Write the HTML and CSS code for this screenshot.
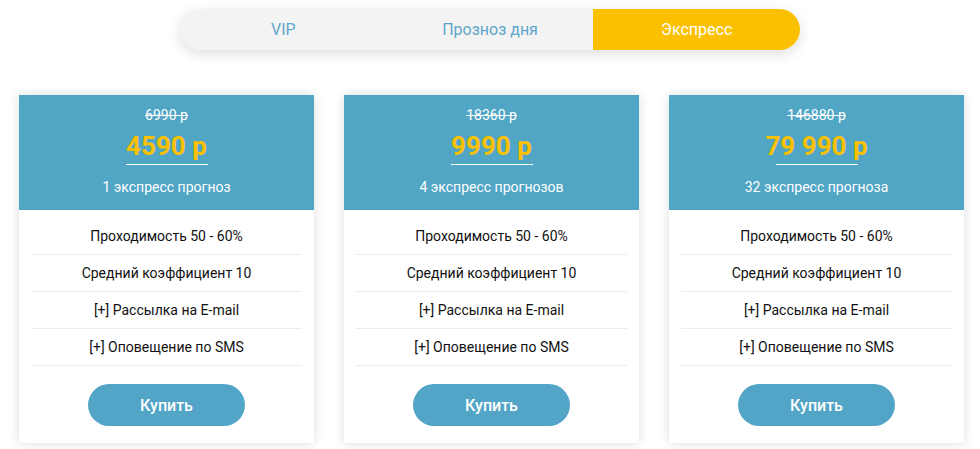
FILE: index.html
```html
<!DOCTYPE html>
<html lang="ru">
<head>
<meta charset="utf-8">
<title>Тарифы</title>
<link rel="stylesheet" href="styles.css">
</head>
<body>
<div class="page">
  <nav class="tabs">
    <a class="tab">VIP</a>
    <a class="tab">Прозноз дня</a>
    <a class="tab tab-active">Экспресс</a>
  </nav>
  <div class="cards">
    <div class="card">
      <div class="card-head">
        <div class="old-price">6990 р</div>
        <div class="price">4590 р</div>
        <div class="price-line"></div>
        <div class="subtitle">1 экспресс прогноз</div>
      </div>
      <ul class="features">
        <li>Проходимость 50 - 60%</li>
        <li>Средний коэффициент 10</li>
        <li>[+] Рассылка на E-mail</li>
        <li>[+] Оповещение по SMS</li>
      </ul>
      <div class="btn-wrap"><button class="buy">Купить</button></div>
    </div>
    <div class="card">
      <div class="card-head">
        <div class="old-price">18360 р</div>
        <div class="price">9990 р</div>
        <div class="price-line"></div>
        <div class="subtitle">4 экспресс прогнозов</div>
      </div>
      <ul class="features">
        <li>Проходимость 50 - 60%</li>
        <li>Средний коэффициент 10</li>
        <li>[+] Рассылка на E-mail</li>
        <li>[+] Оповещение по SMS</li>
      </ul>
      <div class="btn-wrap"><button class="buy">Купить</button></div>
    </div>
    <div class="card">
      <div class="card-head">
        <div class="old-price">146880 р</div>
        <div class="price">79 990 р</div>
        <div class="price-line"></div>
        <div class="subtitle">32 экспресс прогноза</div>
      </div>
      <ul class="features">
        <li>Проходимость 50 - 60%</li>
        <li>Средний коэффициент 10</li>
        <li>[+] Рассылка на E-mail</li>
        <li>[+] Оповещение по SMS</li>
      </ul>
      <div class="btn-wrap"><button class="buy">Купить</button></div>
    </div>
  </div>
</div>
</body>
</html>
```

FILE: styles.css
```css
* { box-sizing: border-box; }
html, body {
  margin: 0;
  padding: 0;
  background: #ffffff;
  font-family: Roboto, "Noto Sans", Arial, sans-serif;
}
.page {
  width: 980px;
  height: 449px;
  overflow: hidden;
  padding-top: 9px;
}
.tabs {
  display: flex;
  width: 620px;
  height: 41px;
  margin: 0 auto;
  border-radius: 21px;
  background: #f3f3f3;
  overflow: hidden;
  box-shadow: 0 4px 14px rgba(0, 0, 0, 0.13);
}
.tab {
  flex: 1;
  display: flex;
  align-items: center;
  justify-content: center;
  font-size: 16px;
  color: #5ea7cb;
}
.tab-active {
  background: #fbc100;
  color: #ffffff;
}
.cards {
  display: flex;
  gap: 30px;
  padding-left: 19px;
  margin-top: 45px;
}
.card {
  width: 295px;
  height: 348px;
  background: #ffffff;
  box-shadow: 0 0 10px rgba(0, 0, 0, 0.14);
}
.card-head {
  height: 115px;
  background: #51a5c5;
  display: flex;
  flex-direction: column;
  align-items: center;
  padding-top: 12px;
  color: #ffffff;
}
.old-price {
  font-size: 14px;
  line-height: 16px;
  text-decoration: line-through;
}
.price {
  margin-top: 8px;
  font-size: 26px;
  font-weight: 700;
  line-height: 30px;
  color: #fbc100;
}
.price-line {
  width: 82px;
  height: 1px;
  margin-top: 3px;
  background: #ffffff;
}
.subtitle {
  margin-top: 14px;
  font-size: 14px;
  line-height: 16px;
}
.features {
  list-style: none;
  margin: 0 12px;
  padding: 8px 0 0;
}
.features li {
  height: 37px;
  display: flex;
  align-items: center;
  justify-content: center;
  border-bottom: 1px solid #ececec;
  font-size: 14px;
  color: #111111;
}
.btn-wrap {
  display: flex;
  justify-content: center;
  padding-top: 18px;
}
.buy {
  width: 157px;
  height: 42px;
  border: none;
  border-radius: 21px;
  background: #52a5c6;
  color: #ffffff;
  font-family: Roboto, "Noto Sans", Arial, sans-serif;
  font-size: 16px;
  font-weight: 500;
}
```
